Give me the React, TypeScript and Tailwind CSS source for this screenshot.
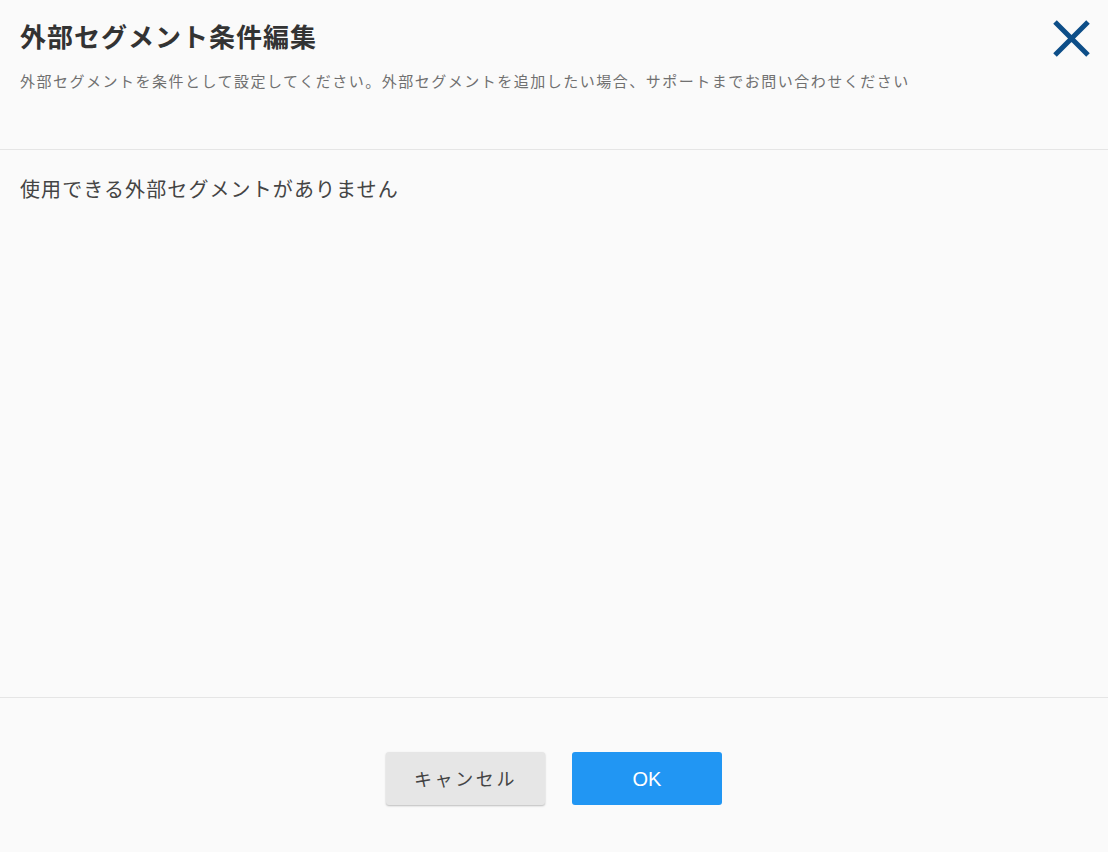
import React from 'react';

const jp = { fontFamily: '"Noto Sans CJK JP", "Noto Sans", sans-serif' };

export default function App() {
  return (
    <div className="flex h-[852px] w-full flex-col bg-[#fafafa] text-[#333]" style={jp}>
      <div className="flex h-[150px] shrink-0 items-start justify-between border-b border-[#e5e5e5] px-5 pt-[17px]">
        <div>
          <h1 className="text-[26px] font-bold leading-[38px] tracking-[1px] text-[#333]">外部セグメント条件編集</h1>
          <p className="mt-[15px] text-[15px] leading-[22px] tracking-[0.1em] text-[#707070]">
            外部セグメントを条件として設定してください。外部セグメントを追加したい場合、サポートまでお問い合わせください
          </p>
        </div>
        <button className="mr-[-7px] mt-[-2px] p-1" aria-label="閉じる">
          <svg width="38" height="38" viewBox="0 0 38 38">
            <path d="M2 3 L35 36 M35 3 L2 36" stroke="#0d4e88" strokeWidth="5" strokeLinecap="butt" />
          </svg>
        </button>
      </div>

      <div className="flex-1 px-5 pt-[24px]">
        <p className="text-[20px] leading-[30px] tracking-[1.1px] text-[#444]">使用できる外部セグメントがありません</p>
      </div>

      <div className="flex h-[155px] shrink-0 items-start justify-center gap-[27px] border-t border-[#e5e5e5] pt-[54px]">
        <button className="h-[53px] w-[159px] rounded-[3px] bg-[#e6e6e6] text-[18px] tracking-[2.6px] text-[#444] shadow-[0_1px_2px_rgba(0,0,0,0.25)]">
          キャンセル
        </button>
        <button
          className="h-[53px] w-[150px] rounded-[3px] bg-[#2196f3] text-[20px] text-white"
          style={{ fontFamily: '"Liberation Sans", Arial, sans-serif' }}
        >
          OK
        </button>
      </div>
    </div>
  );
}
